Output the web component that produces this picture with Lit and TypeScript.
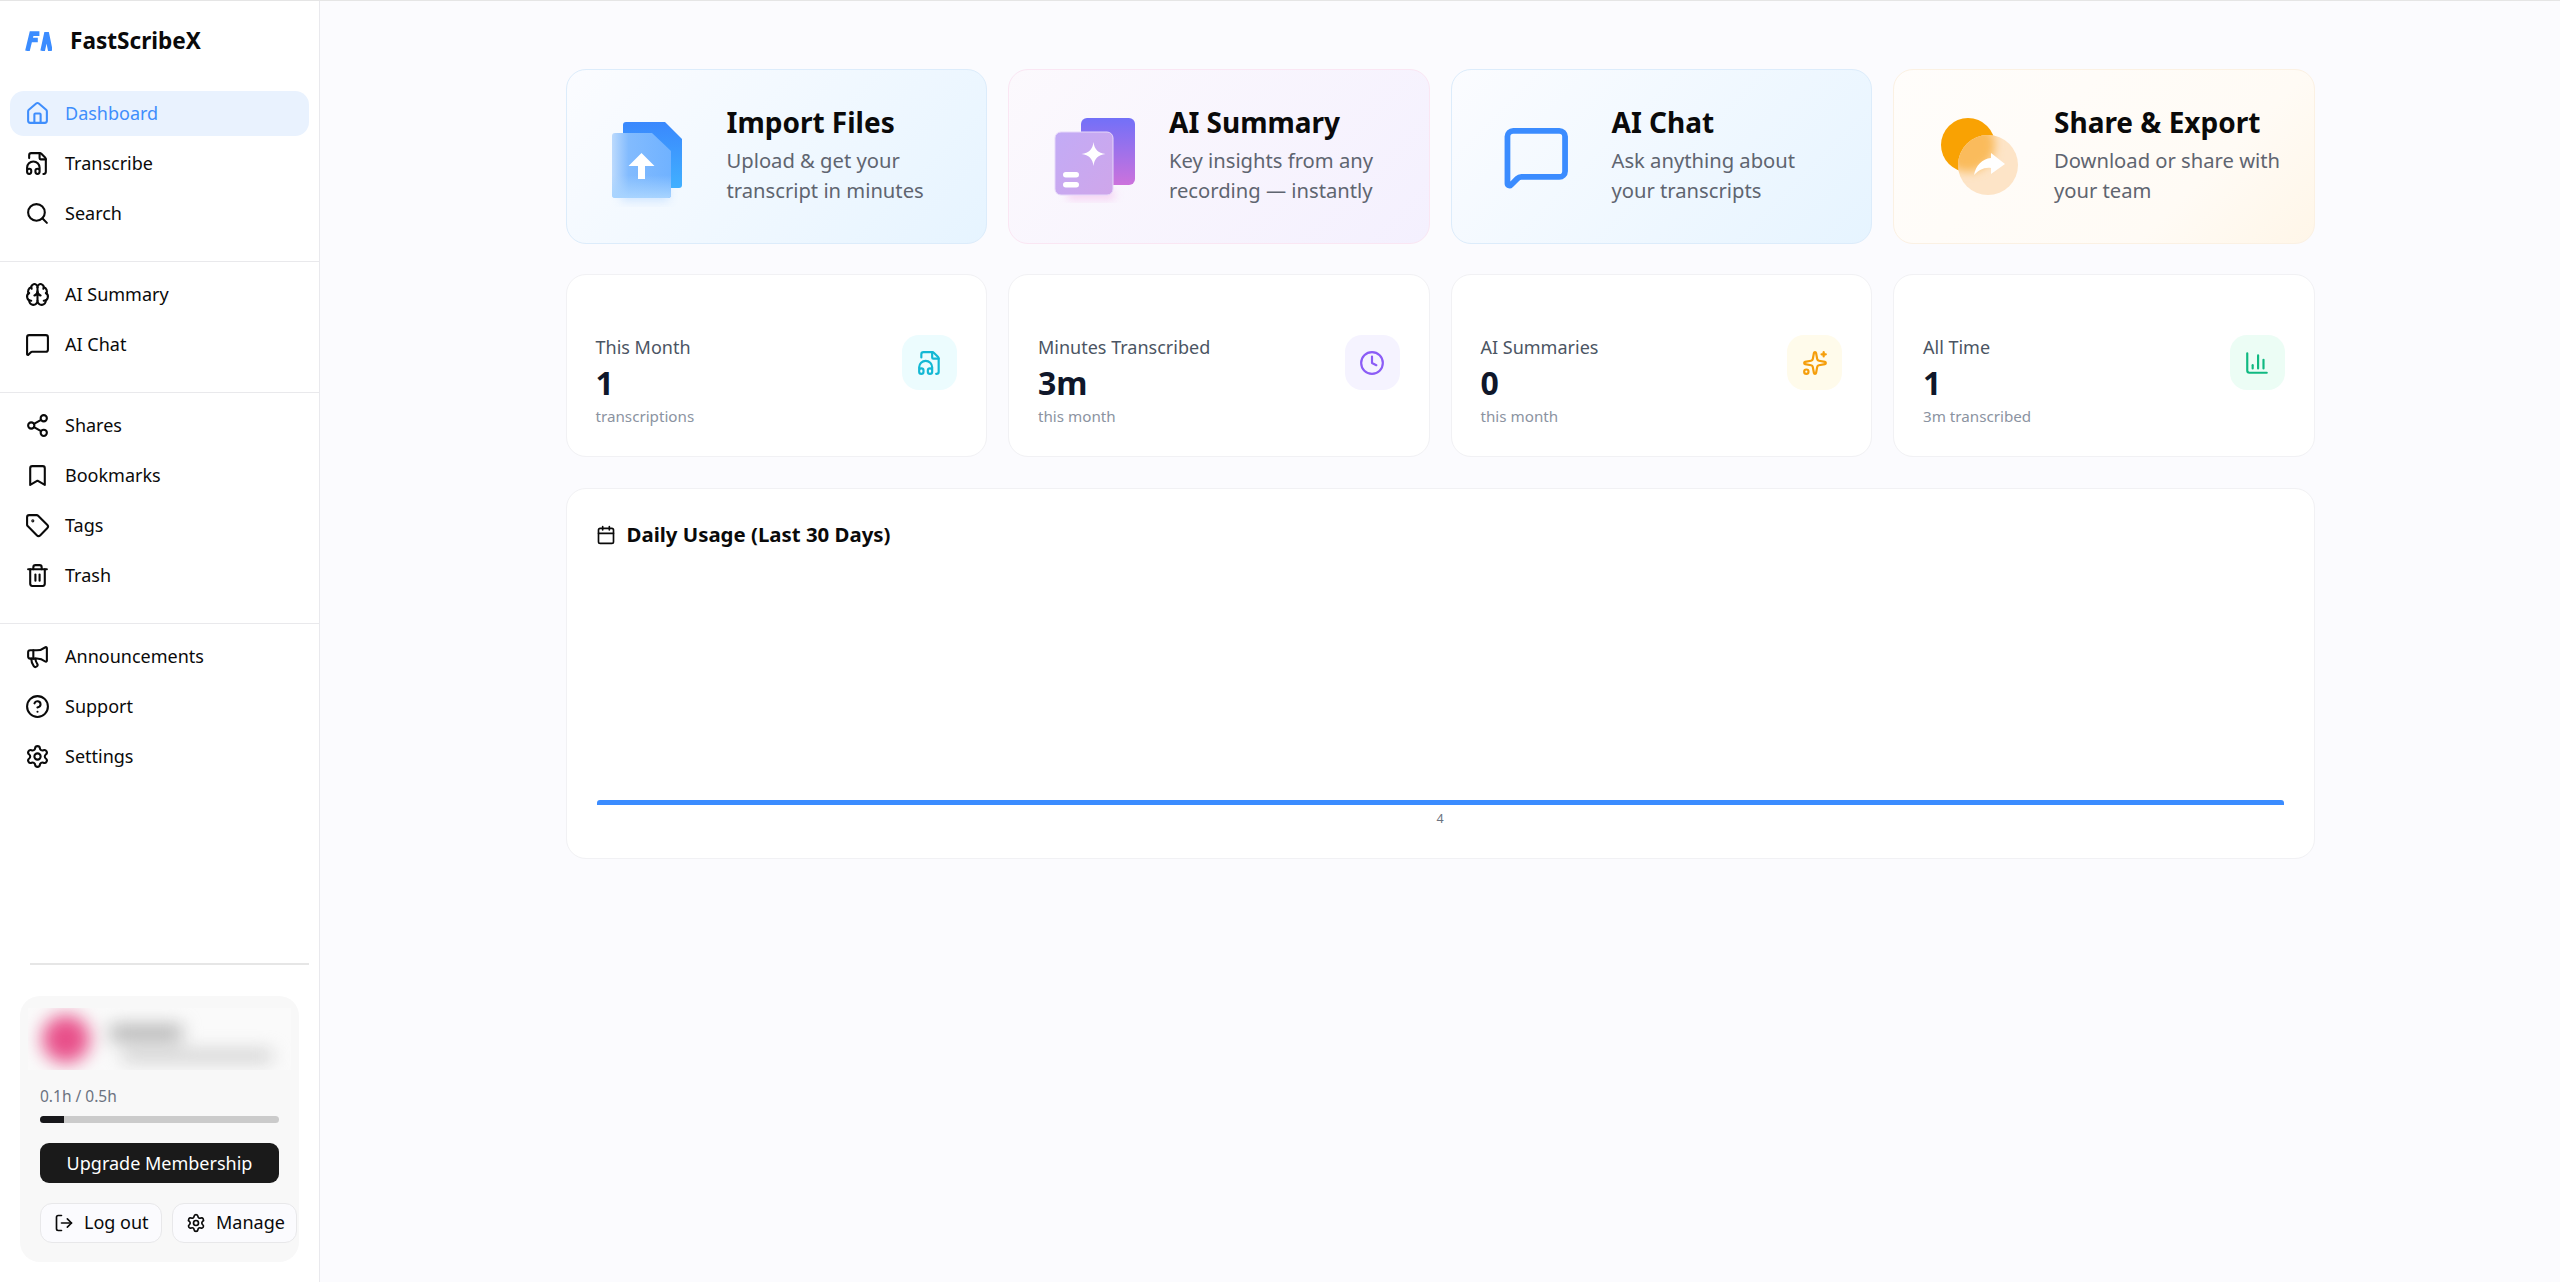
import { LitElement, css, html, svg } from "lit";
import { customElement } from "lit/decorators.js";

const icons: Record<string, unknown> = {
  home: svg`<path d="M15 21v-8a1 1 0 0 0-1-1h-4a1 1 0 0 0-1 1v8"/><path d="M3 10a2 2 0 0 1 .709-1.528l7-5.999a2 2 0 0 1 2.582 0l7 5.999A2 2 0 0 1 21 10v9a2 2 0 0 1-2 2H5a2 2 0 0 1-2-2z"/>`,
  audio: svg`<path d="M4 6.835V4a2 2 0 0 1 2-2h8a2.4 2.4 0 0 1 1.706.706l3.588 3.588A2.4 2.4 0 0 1 20 8v12a2 2 0 0 1-2 2h-.343"/><path d="M14 2v5a1 1 0 0 0 1 1h5"/><path d="M2 19a2 2 0 0 1 4 0v1a2 2 0 0 1-4 0v-4a6 6 0 0 1 12 0v4a2 2 0 0 1-4 0v-1a2 2 0 0 1 4 0"/>`,
  search: svg`<circle cx="11" cy="11" r="8"/><path d="m21 21-4.34-4.34"/>`,
  brain: svg`<path d="M12 18V5"/><path d="M15 13a4.17 4.17 0 0 1-3-4 4.17 4.17 0 0 1-3 4"/><path d="M17.598 6.5A3 3 0 1 0 12 5a3 3 0 1 0-5.598 1.5"/><path d="M17.997 5.125a4 4 0 0 1 2.526 5.77"/><path d="M18 18a4 4 0 0 0 2-7.464"/><path d="M19.967 17.483A4 4 0 1 1 12 18a4 4 0 1 1-7.967-.517"/><path d="M6 18a4 4 0 0 1-2-7.464"/><path d="M6.003 5.125a4 4 0 0 0-2.526 5.77"/>`,
  chat: svg`<path d="M22 17a2 2 0 0 1-2 2H6.828a2 2 0 0 0-1.414.586l-2.202 2.202A.71.71 0 0 1 2 21.286V5a2 2 0 0 1 2-2h16a2 2 0 0 1 2 2z"/>`,
  share: svg`<circle cx="18" cy="5" r="3"/><circle cx="6" cy="12" r="3"/><circle cx="18" cy="19" r="3"/><line x1="8.59" y1="13.51" x2="15.42" y2="17.49"/><line x1="15.41" y1="6.51" x2="8.59" y2="10.49"/>`,
  bookmark: svg`<path d="m19 21-7-4-7 4V5a2 2 0 0 1 2-2h10a2 2 0 0 1 2 2v16z"/>`,
  tag: svg`<path d="M12.586 2.586A2 2 0 0 0 11.172 2H4a2 2 0 0 0-2 2v7.172a2 2 0 0 0 .586 1.414l8.704 8.704a2.426 2.426 0 0 0 3.42 0l6.58-6.58a2.426 2.426 0 0 0 0-3.42z"/><circle cx="7.5" cy="7.5" r=".5" fill="currentColor"/>`,
  trash: svg`<path d="M10 11v6"/><path d="M14 11v6"/><path d="M19 6v14a2 2 0 0 1-2 2H7a2 2 0 0 1-2-2V6"/><path d="M3 6h18"/><path d="M8 6V4a2 2 0 0 1 2-2h4a2 2 0 0 1 2 2v2"/>`,
  megaphone: svg`<path d="M11 6a13 13 0 0 0 8.4-2.8A1 1 0 0 1 21 4v12a1 1 0 0 1-1.6.8A13 13 0 0 0 11 14H5a2 2 0 0 1-2-2V8a2 2 0 0 1 2-2z"/><path d="M6 14a12 12 0 0 0 2.4 7.2 2 2 0 0 0 3.2-2.4A8 8 0 0 1 10 14"/><path d="M8 6v8"/>`,
  help: svg`<circle cx="12" cy="12" r="10"/><path d="M9.09 9a3 3 0 0 1 5.83 1c0 2-3 3-3 3"/><path d="M12 17h.01"/>`,
  settings: svg`<path d="M9.671 4.136a2.34 2.34 0 0 1 4.659 0 2.34 2.34 0 0 0 3.319 1.915 2.34 2.34 0 0 1 2.33 4.033 2.34 2.34 0 0 0 0 3.831 2.34 2.34 0 0 1-2.33 4.033 2.34 2.34 0 0 0-3.319 1.915 2.34 2.34 0 0 1-4.659 0 2.34 2.34 0 0 0-3.32-1.915 2.34 2.34 0 0 1-2.33-4.033 2.34 2.34 0 0 0 0-3.831A2.34 2.34 0 0 1 6.35 6.051a2.34 2.34 0 0 0 3.319-1.915"/><circle cx="12" cy="12" r="3"/>`,
  logout: svg`<path d="m16 17 5-5-5-5"/><path d="M21 12H9"/><path d="M9 21H5a2 2 0 0 1-2-2V5a2 2 0 0 1 2-2h4"/>`,
  calendar: svg`<path d="M8 2v4"/><path d="M16 2v4"/><rect width="18" height="18" x="3" y="4" rx="2"/><path d="M3 10h18"/>`,
  clock: svg`<circle cx="12" cy="12" r="10"/><path d="M12 6v6l4 2"/>`,
  sparkle: svg`<path d="M11.017 2.814a1 1 0 0 1 1.966 0l1.051 5.558a2 2 0 0 0 1.594 1.594l5.558 1.051a1 1 0 0 1 0 1.966l-5.558 1.051a2 2 0 0 0-1.594 1.594l-1.051 5.558a1 1 0 0 1-1.966 0l-1.051-5.558a2 2 0 0 0-1.594-1.594l-5.558-1.051a1 1 0 0 1 0-1.966l5.558-1.051a2 2 0 0 0 1.594-1.594z"/><path d="M20 2v4"/><path d="M22 4h-4"/><circle cx="4" cy="20" r="2"/>`,
  chart: svg`<path d="M3 3v16a2 2 0 0 0 2 2h16"/><path d="M18 17V9"/><path d="M13 17V5"/><path d="M8 17v-3"/>`,
};

const icon = (name: string, cls = "") => html`<svg class="ico ${cls}" viewBox="0 0 24 24" fill="none" stroke="currentColor" stroke-width="2" stroke-linecap="round" stroke-linejoin="round">${icons[name]}</svg>`;

const importArt = html`<svg class="art" viewBox="0 0 100 100">
  <defs>
    <linearGradient id="ib" x1="0" y1="0" x2="0" y2="1"><stop offset="0" stop-color="#3a88fd"/><stop offset="1" stop-color="#41b0ff"/></linearGradient>
    <linearGradient id="if" x1="0" y1="0" x2="1" y2="0"><stop offset="0" stop-color="#bcdafd"/><stop offset=".28" stop-color="#82bbfe"/><stop offset="1" stop-color="#70b2ff"/></linearGradient>
    <linearGradient id="ig" x1="0" y1="0" x2="0" y2="1"><stop offset=".65" stop-color="#a8d4ff" stop-opacity="0"/><stop offset="1" stop-color="#a8d4ff"/></linearGradient>
    <filter id="ish" x="-50%" y="-50%" width="200%" height="200%"><feGaussianBlur stdDeviation="5"/></filter>
  </defs>
  <rect x="24" y="80" width="48" height="14" fill="#9fcbff" opacity=".45" filter="url(#ish)"/>
  <path d="M29 15H68L85 32V78a3 3 0 0 1-3 3H29a3 3 0 0 1-3-3V18a3 3 0 0 1 3-3z" fill="url(#ib)"/>
  <path d="M18 26H55L74 44V88a3 3 0 0 1-3 3H18a3 3 0 0 1-3-3V29a3 3 0 0 1 3-3z" fill="url(#if)"/>
  <path d="M18 26H55L74 44V88a3 3 0 0 1-3 3H18a3 3 0 0 1-3-3V29a3 3 0 0 1 3-3z" fill="url(#ig)"/>
  <path d="M44.5 46L57.5 59H48V72H41V59H31.5z" fill="#fff"/>
</svg>`;

const summaryArt = html`<svg class="art" viewBox="0 0 100 100">
  <defs>
    <linearGradient id="sb" x1="0" y1="0" x2="0" y2="1"><stop offset="0" stop-color="#7270f8"/><stop offset="1" stop-color="#cc72dc"/></linearGradient>
    <linearGradient id="sf" x1="0" y1="0" x2="1" y2="1"><stop offset="0" stop-color="#c2abf6"/><stop offset="1" stop-color="#cfa6ea"/></linearGradient>
    <filter id="ssh" x="-50%" y="-50%" width="200%" height="200%"><feGaussianBlur stdDeviation="4"/></filter>
  </defs>
  <rect x="28" y="84" width="48" height="8" rx="4" fill="#f3a8e6" opacity=".55" filter="url(#ssh)"/>
  <rect x="42" y="11" width="54" height="67" rx="6" fill="url(#sb)"/>
  <rect x="16" y="25" width="58" height="63" rx="6" fill="url(#sf)" stroke="#e6d8fa" stroke-width="1"/>
  <path d="M54.5 35C55.5 42.5 59 46 66.5 47C59 48 55.5 51.5 54.5 59C53.5 51.5 50 48 42.5 47C50 46 53.5 42.5 54.5 35z" fill="#fff"/>
  <rect x="24" y="65" width="16" height="5.5" rx="2.75" fill="#fff"/>
  <rect x="24" y="75" width="16" height="5.5" rx="2.75" fill="#fff"/>
</svg>`;

const chatArt = html`<svg class="art" viewBox="0 0 100 100">
  <g transform="translate(19.7 15.2) scale(2.88)" fill="none" stroke="#3b8cff" stroke-width="2" stroke-linecap="round" stroke-linejoin="round">${icons.chat}</g>
</svg>`;

const shareArt = html`<svg class="art" viewBox="0 0 100 100">
  <defs>
    <clipPath id="xc"><circle cx="64" cy="58" r="30"/></clipPath>
    <filter id="xb" x="-50%" y="-50%" width="200%" height="200%"><feGaussianBlur stdDeviation="5"/></filter>
  </defs>
  <circle cx="44" cy="38" r="27" fill="#f9a203"/>
  <circle cx="64" cy="58" r="30" fill="#fde4c7"/>
  <g clip-path="url(#xc)"><circle cx="44" cy="38" r="27" fill="#fabb5c" filter="url(#xb)"/></g>
  <path d="M67 46L81 57L67 67V61C60 60 55 63 50 68C52 58 58 52 67 51z" fill="#fff"/>
</svg>`;

const actions = [
  { title: "Import Files", l1: "Upload & get your", l2: "transcript in minutes", art: importArt, tone: "blue" },
  { title: "AI Summary", l1: "Key insights from any", l2: "recording — instantly", art: summaryArt, tone: "pink" },
  { title: "AI Chat", l1: "Ask anything about", l2: "your transcripts", art: chatArt, tone: "blue" },
  { title: "Share & Export", l1: "Download or share with", l2: "your team", art: shareArt, tone: "amber" },
];

const stats = [
  { label: "This Month", value: "1", sub: "transcriptions", ic: "audio", tone: "cyan" },
  { label: "Minutes Transcribed", value: "3m", sub: "this month", ic: "clock", tone: "violet" },
  { label: "AI Summaries", value: "0", sub: "this month", ic: "sparkle", tone: "yellow" },
  { label: "All Time", value: "1", sub: "3m transcribed", ic: "chart", tone: "green" },
];

const navGroups = [
  [["home", "Dashboard"], ["audio", "Transcribe"], ["search", "Search"]],
  [["brain", "AI Summary"], ["chat", "AI Chat"]],
  [["share", "Shares"], ["bookmark", "Bookmarks"], ["tag", "Tags"], ["trash", "Trash"]],
  [["megaphone", "Announcements"], ["help", "Support"], ["settings", "Settings"]],
];

@customElement("app-root")
export class AppRoot extends LitElement {
  static styles = css`
    :host {
      display: block;
      height: 1282px;
      overflow: hidden;
      font-family: "Noto Sans", "Open Sans", sans-serif;
      color: #0a0a0a;
    }
    .page {
      display: flex;
      height: 100%;
      box-sizing: border-box;
      border-top: 1px solid #e5e5e5;
      background: #fbfbfe;
    }
    .ico {
      display: block;
      flex: none;
      width: 25px;
      height: 25px;
    }

    .side {
      display: flex;
      flex-direction: column;
      flex: none;
      box-sizing: border-box;
      width: 320px;
      background: #fff;
      border-right: 1px solid #e9e9ed;
    }
    .brand {
      display: flex;
      align-items: center;
      gap: 18px;
      height: 80px;
      padding-left: 25px;
      margin-bottom: 10px;
      font-size: 22.6px;
      font-weight: 700;
    }
    .brand span {
      padding-bottom: 2px;
    }
    .logo {
      width: 27px;
      height: 20px;
      flex: none;
    }
    .group {
      display: flex;
      flex-direction: column;
      gap: 5px;
      padding: 10px 10px 25px;
      border-bottom: 1px solid #e9e9ec;
    }
    .group:first-of-type {
      padding-top: 0;
    }
    .group:last-of-type {
      border-bottom: 0;
    }
    .row {
      display: flex;
      align-items: center;
      gap: 15px;
      height: 45px;
      padding-left: 15px;
      border-radius: 14px;
      font-size: 18px;
    }
    .row span {
      padding-bottom: 2px;
    }
    .row.on {
      background: #e9f2fe;
      color: #3f8efc;
    }

    .foot {
      margin-top: auto;
      padding: 0 10px 20px;
    }
    .rule {
      height: 2px;
      margin: 0 0 31px 20px;
      background: #e6e6e6;
    }
    .card {
      margin: 0 10px;
      padding: 12px 8px 19px;
      border-radius: 20px;
      background: #f8f8f8;
    }
    .user {
      height: 62px;
      overflow: hidden;
      background: #fafafa;
    }
    .user-in {
      display: flex;
      align-items: center;
      gap: 20px;
      height: 100%;
      padding-left: 14px;
      filter: blur(9px);
    }
    .avatar {
      width: 48px;
      height: 48px;
      border-radius: 50%;
      background: #e8508a;
      flex: none;
    }
    .lines {
      display: flex;
      flex-direction: column;
      gap: 10px;
      margin-top: 8px;
    }
    .ln1 {
      width: 72px;
      height: 16px;
      background: #b0b0b0;
    }
    .ln2 {
      width: 150px;
      height: 10px;
      margin-left: 12px;
      background: #c4c4c4;
    }
    .plan {
      padding: 15px 12px 0;
    }
    .usage {
      font-size: 15.5px;
      line-height: 22px;
      color: #6b7280;
    }
    .track {
      height: 7px;
      margin-top: 9px;
      border-radius: 4px;
      background: #cbcbcb;
      overflow: hidden;
    }
    .fill {
      height: 100%;
      background: #18181b;
    }
    .upgrade {
      display: flex;
      align-items: center;
      justify-content: center;
      height: 40px;
      margin-top: 20px;
      border-radius: 9px;
      background: #1a1a1a;
      color: #fff;
      font-size: 18px;
    }
    .btns {
      display: grid;
      grid-template-columns: 122px 125px;
      gap: 10px;
      margin-top: 20px;
      margin-right: -18px;
    }
    .btn {
      display: flex;
      align-items: center;
      gap: 10px;
      box-sizing: border-box;
      height: 40px;
      padding-left: 13px;
      border: 1px solid #e8e8ea;
      border-radius: 12px;
      background: #fbfbfe;
      font-size: 18px;
      white-space: nowrap;
    }
    .btn .ico {
      width: 20px;
      height: 20px;
    }
    .btn span {
      padding-bottom: 2px;
    }

    .main {
      flex: 1;
      padding-top: 68px;
    }
    .wrap {
      width: 1749px;
      margin: 0 auto;
    }
    .grid {
      display: grid;
      grid-template-columns: repeat(4, 1fr);
      gap: 21px;
    }
    .action {
      display: flex;
      align-items: center;
      gap: 30px;
      box-sizing: border-box;
      height: 175px;
      padding-left: 30px;
      border: 1px solid #dcecfb;
      border-radius: 20px;
    }
    .action.blue {
      background: linear-gradient(135deg, #fbfcff 0%, #e6f4ff 100%);
    }
    .action.pink {
      border-color: #fae6f3;
      background: linear-gradient(135deg, #fcf9fd 0%, #f4f0fe 100%);
    }
    .action.amber {
      border-color: #fbf1e3;
      background: linear-gradient(135deg, #fffdfb 0%, #fffbf5 70%, #fff6e8 100%);
    }
    .art {
      display: block;
      flex: none;
      width: 100px;
      height: 100px;
    }
    .a-text {
      padding-bottom: 6px;
    }
    .a-title {
      font-size: 28px;
      font-weight: 700;
      line-height: 38px;
    }
    .a-sub {
      margin-top: 4px;
      font-size: 20.2px;
      line-height: 30px;
      color: #5f6570;
    }
    .stats {
      margin-top: 30px;
    }
    .stat {
      display: flex;
      justify-content: space-between;
      align-items: flex-start;
      box-sizing: border-box;
      height: 183px;
      padding: 60px 29px 0;
      border: 1px solid #f1f1f4;
      border-radius: 20px;
      background: #fff;
    }
    .s-label {
      font-size: 18px;
      line-height: 24px;
      color: #4b5563;
    }
    .s-value {
      margin-top: 4px;
      font-size: 32px;
      font-weight: 700;
      line-height: 40px;
      color: #0f172a;
    }
    .s-sub {
      margin-top: 2px;
      font-size: 15.2px;
      line-height: 22px;
      color: #8b93a1;
    }
    .tile {
      display: flex;
      align-items: center;
      justify-content: center;
      width: 55px;
      height: 55px;
      border-radius: 17px;
    }
    .tile .ico {
      width: 26px;
      height: 26px;
    }
    .tile.cyan {
      background: #ecfcfe;
      color: #14b8d4;
    }
    .tile.violet {
      background: #f5f3ff;
      color: #8b5cf6;
    }
    .tile.yellow {
      background: #fffbeb;
      color: #f59e0b;
    }
    .tile.green {
      background: #ecfdf5;
      color: #10b981;
    }
    .chart {
      display: flex;
      flex-direction: column;
      box-sizing: border-box;
      height: 371px;
      margin-top: 31px;
      padding: 29px 30px 0;
      border: 1px solid #f1f1f4;
      border-radius: 20px;
      background: #fff;
    }
    .c-title {
      display: flex;
      align-items: center;
      gap: 11px;
      height: 34px;
      margin-left: -1px;
      font-size: 20.4px;
      font-weight: 700;
    }
    .c-title .ico {
      width: 20px;
      height: 20px;
    }
    .c-title span {
      padding-bottom: 3px;
    }
    .bar {
      height: 5px;
      margin-top: 248px;
      border-radius: 3px 3px 0 0;
      background: #3b8cff;
    }
    .tick {
      margin-top: 6px;
      text-align: center;
      font-size: 12.5px;
      line-height: 16px;
      color: #6b7280;
    }
  `;

  render() {
    return html`
      <div class="page">
        <aside class="side">
          <div class="brand">
            <svg class="logo" viewBox="0 0 27 20" fill="none" stroke="#3b8cff" stroke-width="4.6">
              <path d="M2.4 20L6.6 2.6H14.4M5 9H12.8"/>
              <path d="M17.6 20L21.6 1.5L25.4 20"/>
            </svg>
            <span>FastScribeX</span>
          </div>
          ${navGroups.map((g) => html`
            <nav class="group">
              ${g.map(([ic, label]) => html`
                <div class="row ${label === "Dashboard" ? "on" : ""}">${icon(ic)}<span>${label}</span></div>
              `)}
            </nav>
          `)}
          <div class="foot">
            <div class="rule"></div>
            <div class="card">
              <div class="user">
                <div class="user-in">
                  <div class="avatar"></div>
                  <div class="lines"><div class="ln1"></div><div class="ln2"></div></div>
                </div>
              </div>
              <div class="plan">
                <div class="usage">0.1h / 0.5h</div>
                <div class="track"><div class="fill" style="width: 10%"></div></div>
                <div class="upgrade">Upgrade Membership</div>
                <div class="btns">
                  <div class="btn">${icon("logout")}<span>Log out</span></div>
                  <div class="btn">${icon("settings")}<span>Manage</span></div>
                </div>
              </div>
            </div>
          </div>
        </aside>
        <main class="main">
          <div class="wrap">
            <div class="grid">
              ${actions.map((a) => html`
                <div class="action ${a.tone}">
                  ${a.art}
                  <div class="a-text">
                    <div class="a-title">${a.title}</div>
                    <div class="a-sub">${a.l1}<br />${a.l2}</div>
                  </div>
                </div>
              `)}
            </div>
            <div class="grid stats">
              ${stats.map((s) => html`
                <div class="stat">
                  <div>
                    <div class="s-label">${s.label}</div>
                    <div class="s-value">${s.value}</div>
                    <div class="s-sub">${s.sub}</div>
                  </div>
                  <div class="tile ${s.tone}">${icon(s.ic)}</div>
                </div>
              `)}
            </div>
            <div class="chart">
              <div class="c-title">${icon("calendar")}<span>Daily Usage (Last 30 Days)</span></div>
              <div class="bar"></div>
              <div class="tick">4</div>
            </div>
          </div>
        </main>
      </div>
    `;
  }
}
